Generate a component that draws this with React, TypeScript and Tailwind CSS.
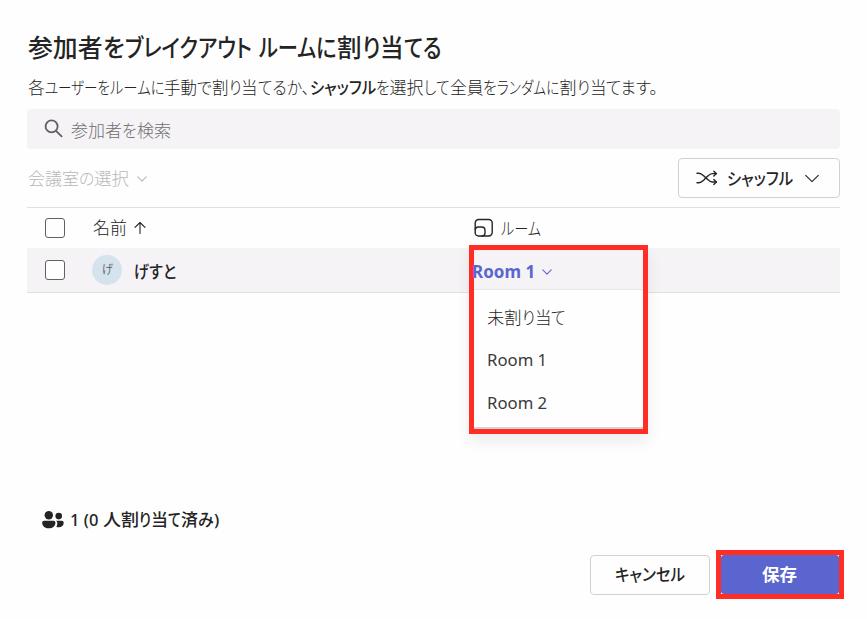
import React, { useLayoutEffect, useRef, useState } from 'react';

type Segment = [text: string, width: number, bold?: boolean];

interface FitProps {
  segments: Segment[];
}

// Squeezes one run of text to the given width (UI kana are narrower than kanji)
const Run: React.FC<{ text: string; width: number; bold?: boolean }> = ({ text, width, bold }) => {
  const ref = useRef<HTMLSpanElement>(null);
  const [scale, setScale] = useState(1);

  useLayoutEffect(() => {
    if (ref.current) {
      setScale(width / ref.current.offsetWidth);
    }
  }, [text, width]);

  return (
    <span className="inline-block whitespace-pre" style={{ width }}>
      <span
        ref={ref}
        className={bold ? 'inline-block origin-left font-medium' : 'inline-block origin-left'}
        style={{ transform: `scaleX(${scale})` }}
      >
        {text}
      </span>
    </span>
  );
};

const Fit: React.FC<FitProps> = ({ segments }) => (
  <span className="inline-flex whitespace-pre">
    {segments.map(([text, width, bold], i) => (
      <Run key={i} text={text} width={width} bold={bold} />
    ))}
  </span>
);

const Chevron: React.FC<{ className?: string }> = ({ className }) => (
  <svg viewBox="0 0 16 10" className={className} fill="none" stroke="currentColor" strokeWidth="1.1" strokeLinecap="round" strokeLinejoin="round">
    <path d="M1 1.5 8 8.5 15 1.5" vectorEffect="non-scaling-stroke" />
  </svg>
);

const SearchIcon = () => (
  <svg width="20" height="20" viewBox="0 0 20 20" fill="none" stroke="#616161" strokeWidth="1.8" strokeLinecap="round">
    <circle cx="7.6" cy="7.4" r="6" />
    <path d="M12 11.8 17.6 17.4" />
  </svg>
);

const ShuffleIcon = () => (
  <svg width="22" height="16" viewBox="0 0 22 16" fill="none" stroke="#242424" strokeWidth="1.4" strokeLinecap="round" strokeLinejoin="round">
    <path d="M1 3.2h1.6c2 0 3.4 1 5 2.5l3.6 3.4c1.6 1.5 3 2.9 5 2.9h4.2" />
    <path d="M1 12.7h1.6c2 0 3.4-1 5-2.5l3.6-3.6c1.6-1.5 3-3 5-3h4.2" />
    <path d="M17.8 1.2 20.4 3.6 17.8 6M17.8 9.6 20.4 12 17.8 14.4" />
  </svg>
);

const RoomIcon = () => (
  <svg width="20" height="20" viewBox="0 0 20 20" fill="none" stroke="#242424" strokeWidth="1.4" strokeLinecap="round">
    <path d="M1.2 11.5V5a3.5 3.5 0 0 1 3.500-3.500h10a3.500 3.500 0 0 1 3.500 3.500v9.500a3.500 3.500 0 0 1-3.500 3.500H8" />
    <rect x="1.2" y="9" width="9.8" height="9" rx="3.2" />
  </svg>
);

const PeopleIcon = () => (
  <svg width="22" height="18" viewBox="0 0 22 18" fill="#242424">
    <circle cx="6.8" cy="4.3" r="4.2" />
    <circle cx="16.7" cy="5.1" r="3.3" />
    <path d="M2.2 9.8h9.2c1.2 0 2 .8 2 2 0 3.5-2.7 5.5-6.6 5.5S.2 15.3.2 11.8c0-1.2.8-2 2-2Z" />
    <path d="M14 9.8h5.7c1.2 0 2 .8 2 2 0 2.9-2 4.500-4.900 4.500-.9 0-1.700-.1-2.400-.4.6-1 .9-2.500.9-3.900 0-.8-.5-1.700-1.300-2.200Z" />
  </svg>
);

const Checkbox = () => <span className="size-5 rounded-[3px] border border-[#616161] bg-[#fefefe]" />;

const rooms: Segment[][] = [
  [['未割', 34.5], ['り', 13], ['当', 16.5], ['て', 15]],
  [['Room 1', 60]],
  [['Room 2', 60]],
];

const App: React.FC = () => {
  return (
    <div className="flex h-[619px] w-[867px] flex-col bg-[#fefefe] pr-[27px] pl-[27px] font-['Noto_Sans','Noto_Sans_CJK_JP',sans-serif] text-[17px] leading-6 text-[#242424] [font-feature-settings:'palt']">
      <h1 className="mt-[31px] h-[34px] pl-px text-[24.5px] leading-[34px] font-medium">
        <Fit
          segments={[
            ['参加者', 75], ['を', 22], ['ブレイクアウト', 127], [' ', 7], ['ルーム', 57], ['に', 21],
            ['割', 25], ['り', 18], ['当', 24], ['てる', 38],
          ]}
        />
      </h1>
      <p className="mt-[11px] h-6 pl-px font-light">
        <Fit
          segments={[
            ['各', 17], ['ユーザーを', 65], ['ルームに', 54], ['手動', 33], ['で', 15], ['割', 16.5], ['り', 12.5],
            ['当', 16.5], ['てるか、', 52], ['シャッフル', 66, true], ['を', 14], ['選択', 34], ['して', 26],
            ['全員', 33.5], ['を', 14], ['ランダムに', 62.5], ['割', 17], ['り', 13], ['当', 16.5], ['てます。', 52],
          ]}
        />
      </p>

      <div className="mt-[9px] flex h-10 items-center rounded-[4px] bg-[#f5f3f6] pl-[17px] text-[#707070]">
        <SearchIcon />
        <span className="ml-[7px] pt-[3px] font-light"><Fit segments={[['参加者', 51], ['を', 15], ['検索', 34]]} /></span>
      </div>

      <div className="mt-[9px] flex h-10 items-center justify-between">
        <div className="flex items-center gap-2 pt-px pl-px font-light text-[#b8b8b8]">
          <Fit segments={[['会議室', 51], ['の', 15], ['選択', 35]]} />
          <Chevron className="h-[6px] w-[10px]" />
        </div>
        <button className="flex h-10 w-[162px] items-center rounded-[4px] border border-[#d1d1d1] bg-[#fefefe] pl-[17px] font-medium">
          <ShuffleIcon />
          <span className="ml-[9px] pt-px"><Fit segments={[['シャッフル', 66]]} /></span>
          <Chevron className="ml-[11px] h-[9px] w-4" />
        </button>
      </div>

      <div className="mt-[9px] flex h-[41px] items-center border-t border-[#e0e0e0] pl-[18px] font-light">
        <Checkbox />
        <div className="ml-7 flex w-[381px] items-center gap-[7px]">
          <Fit segments={[['名前', 34]]} />
          <svg width="12" height="14" viewBox="0 0 12 14" fill="none" stroke="#242424" strokeWidth="1.1" strokeLinecap="round" strokeLinejoin="round">
            <path d="M6 12.5V1.5M1 6.3 6 1.5 11 6.3" />
          </svg>
        </div>
        <RoomIcon />
        <span className="ml-[7px] pt-[2px]"><Fit segments={[['ルーム', 40]]} /></span>
      </div>

      <div className="relative flex h-[45px] items-center border-b border-[#e0e0e0] bg-[#f5f3f6] pl-[18px]">
        <Checkbox />
        <div className="ml-[27px] flex size-[30px] items-center justify-center rounded-full bg-[#d5e3ec] text-[12px] text-[#5c6b75]">
          <Fit segments={[['げ', 11]]} />
        </div>
        <span className="ml-3 pt-[3px] font-medium"><Fit segments={[['げすと', 42]]} /></span>

        {/* open room picker */}
        <div className="absolute top-[-3px] left-[442px] flex h-[189px] w-[179px] flex-col border-5 border-[#ff2d23] bg-[#fefefe] shadow-[0_8px_14px_rgba(0,0,0,0.07)]">
          <div className="flex h-10 items-center gap-[7px] border-b border-[#e8e6ea] bg-[#f5f3f6] pt-1 font-bold text-[#5b65d0]">
            <span className="-ml-[2px]"><Fit segments={[['Room 1', 63]]} /></span>
            <Chevron className="h-[6px] w-[10px]" />
          </div>
          <ul className="flex flex-1 flex-col border-b-2 border-[#d4d4d8] pt-[5px] pl-[13px]">
            {rooms.map((segments, i) => (
              <li key={i} className={i === 0 ? 'flex h-[43px] items-center pt-[2px] font-light' : 'flex h-[43px] items-center text-[#3a3a3a]'}>
                <Fit segments={segments} />
              </li>
            ))}
          </ul>
        </div>
      </div>

      <div className="mt-[215px] flex h-6 items-center gap-[6px] pl-[15px] font-medium">
        <PeopleIcon />
        <Fit segments={[['1 (0 ', 33], ['人割', 36], ['り', 12], ['当', 17], ['て', 13], ['済', 17], ['み', 16], [')', 5]]} />
      </div>

      <div className="mt-[18px] -mr-1 flex h-[49px] items-center justify-end gap-[6px]">
        <button className="flex h-10 w-[120px] items-center justify-center rounded-[4px] border border-[#d1d1d1] bg-[#fefefe] pt-px font-medium">
          <Fit segments={[['キャンセル', 70]]} />
        </button>
        <div className="h-[49px] w-[128px] border-5 border-[#ff2d23] bg-white">
          <button className="flex h-full w-full items-center justify-center rounded-[3px] bg-[#5b65d0] pt-px pr-[2px] font-bold text-white">
            <Fit segments={[['保存', 35]]} />
          </button>
        </div>
      </div>
    </div>
  );
};

export default App;
